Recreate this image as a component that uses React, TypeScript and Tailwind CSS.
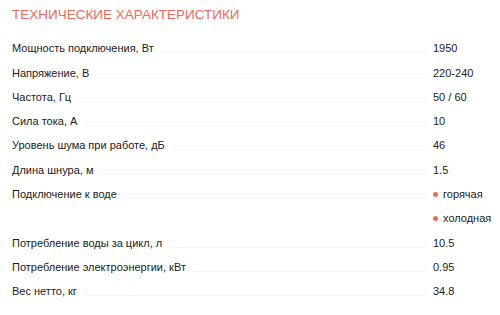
import React from "react";

const specs: { label: string; value: string; dot?: boolean }[] = [
  { label: "Мощность подключения, Вт", value: "1950" },
  { label: "Напряжение, В", value: "220-240" },
  { label: "Частота, Гц", value: "50 / 60" },
  { label: "Сила тока, А", value: "10" },
  { label: "Уровень шума при работе, дБ", value: "46" },
  { label: "Длина шнура, м", value: "1.5" },
  { label: "Подключение к воде", value: "горячая", dot: true },
  { label: "", value: "холодная", dot: true },
  { label: "Потребление воды за цикл, л", value: "10.5" },
  { label: "Потребление электроэнергии, кВт", value: "0.95" },
  { label: "Вес нетто, кг", value: "34.8" },
];

const App = () => {
  return (
    <div className="w-[500px] h-[315px] bg-white px-3 font-['Liberation_Sans',Arial,sans-serif] text-[#222]">
      <p className="pt-[6px] h-[36px] text-[13.5px] leading-[18px] text-[#ee6b5c] uppercase">
        Технические характеристики
      </p>
      <div className="flex flex-col">
        {specs.map((s, i) => (
          <div key={i} className="flex h-[24.3px] text-[11px]">
            <div className="flex flex-1 items-end pb-[5px]">
              <span className="leading-[14px] whitespace-nowrap">{s.label}</span>
              {s.label && (
                <span className="flex-1 ml-2 mr-2 mb-[2px] border-b border-dotted border-[#ececec]" />
              )}
            </div>
            <div className="w-[55px] flex items-end pb-[5px] whitespace-nowrap">
              {s.dot && (
                <span className="shrink-0 w-[5px] h-[5px] rounded-full bg-[#ee6b5c] mr-[5px] mb-[4px]" />
              )}
              <span className="leading-[14px]">{s.value}</span>
            </div>
          </div>
        ))}
      </div>
    </div>
  );
};

export default App;
